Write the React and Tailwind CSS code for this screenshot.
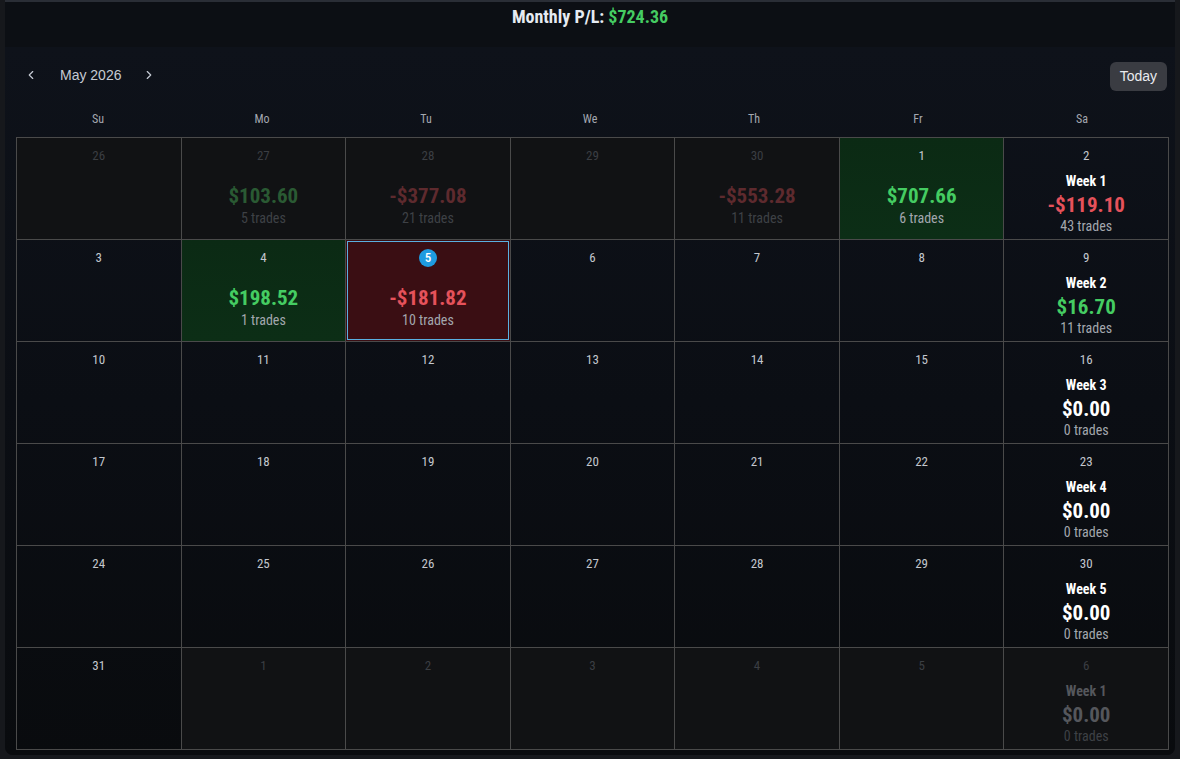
import { ChevronLeft, ChevronRight } from 'lucide-react'

const COND = { fontFamily: "'Roboto Condensed', 'Liberation Sans Narrow', Roboto, sans-serif" }

const days = [
  // week 1
  { d: 26, out: true },
  { d: 27, out: true, pl: 103.6, trades: 5 },
  { d: 28, out: true, pl: -377.08, trades: 21 },
  { d: 29, out: true },
  { d: 30, out: true, pl: -553.28, trades: 11 },
  { d: 1, pl: 707.66, trades: 6 },
  { d: 2, week: 1, pl: -119.1, trades: 43 },
  // week 2
  { d: 3 },
  { d: 4, pl: 198.52, trades: 1 },
  { d: 5, pl: -181.82, trades: 10, today: true },
  { d: 6 },
  { d: 7 },
  { d: 8 },
  { d: 9, week: 2, pl: 16.7, trades: 11 },
  // week 3
  { d: 10 }, { d: 11 }, { d: 12 }, { d: 13 }, { d: 14 }, { d: 15 },
  { d: 16, week: 3, pl: 0, trades: 0 },
  // week 4
  { d: 17 }, { d: 18 }, { d: 19 }, { d: 20 }, { d: 21 }, { d: 22 },
  { d: 23, week: 4, pl: 0, trades: 0 },
  // week 5
  { d: 24 }, { d: 25 }, { d: 26 }, { d: 27 }, { d: 28 }, { d: 29 },
  { d: 30, week: 5, pl: 0, trades: 0 },
  // week 6
  { d: 31 },
  { d: 1, out: true }, { d: 2, out: true }, { d: 3, out: true }, { d: 4, out: true }, { d: 5, out: true },
  { d: 6, out: true, week: 1, pl: 0, trades: 0 },
]

const fmt = (v) => (v < 0 ? '-$' : '$') + Math.abs(v).toFixed(2)

function Amount({ v, out }){
  let color = 'text-white'
  if (v > 0) color = out ? 'text-[#2a5a33]' : 'text-[#45cc62]'
  if (v < 0) color = out ? 'text-[#5e2a2e]' : 'text-[#e5525b]'
  if (v === 0 && out) color = 'text-[#55575c]'
  return <div className={`text-[21px] font-bold leading-[26px] ${color}`} style={COND}>{fmt(v)}</div>
}

function Cell({ c }){
  let bg = c.out ? 'bg-[#111214]' : ''
  if (!c.out && !c.week && c.pl > 0) bg = 'bg-gradient-to-b from-[#0b2a14] to-[#0c2e16]'
  if (!c.out && !c.week && c.pl < 0) bg = 'bg-[#3a0e13]'
  const dateColor = c.out ? 'text-[#3b3e43]' : 'text-[#c3c7ce]'
  const tradeColor = c.out ? 'text-[#3e4146]' : 'text-[#a3a7ae]'
  return (
    <div className={`h-[102px] border-r border-b border-[#4a4a4a] ${bg} ${c.today ? 'p-px' : ''}`}>
      <div className={`h-full flex flex-col items-center ${c.today ? 'border border-[#5ab0e0]' : ''}`}>
        {c.today ? (
          <div className="mt-[7px] w-[18px] h-[18px] rounded-full bg-[#1e9be0] text-white text-[13px] font-medium flex items-center justify-center" style={COND}>{c.d}</div>
        ) : (
          <div className={`mt-[9px] text-[13px] leading-[18px] ${dateColor}`} style={COND}>{c.d}</div>
        )}
        {c.week ? (
          <>
            <div className={`mt-[7px] text-[14px] font-bold leading-[18px] ${c.out ? 'text-[#55575c]' : 'text-white'}`} style={COND}>Week {c.week}</div>
            <div className="mt-[2px]"><Amount v={c.pl} out={c.out} /></div>
            <div className={`-mt-px text-[14px] leading-[18px] ${tradeColor}`} style={COND}>{c.trades} trades</div>
          </>
        ) : c.trades != null ? (
          <>
            <div className={c.today ? 'mt-[18px]' : 'mt-[18px]'}><Amount v={c.pl} out={c.out} /></div>
            <div className={`text-[14px] leading-[18px] ${tradeColor}`} style={COND}>{c.trades} trades</div>
          </>
        ) : null}
      </div>
    </div>
  )
}

export default function App(){
  return (
    <div className="w-[1180px] h-[759px] bg-[#16181c] pl-[5px] pr-[5px]" style={{ fontFamily: "'Liberation Sans', Arial, sans-serif" }}>
      <div className="h-[755px] bg-[#0b0d12] rounded-b-lg overflow-hidden border-t-2 border-[#2a2e36]">
        <div className="h-[45px] flex justify-center pt-[3px] bg-[#0c0f14]">
          <div className="text-[18px] font-bold text-[#e6ebf2] leading-6" style={COND}>
            Monthly P/L: <span className="text-[#45cc62]">$724.36</span>
          </div>
        </div>
        <div className="bg-gradient-to-b from-[#0e121a] via-[#0b0e14] to-[#090b0e] h-[708px] px-[11px]">
          <div className="flex items-center justify-between h-[56px]">
            <div className="flex items-center text-[#c5cad3]">
              <button className="w-[30px] flex justify-center"><ChevronLeft size={14} strokeWidth={2} /></button>
              <span className="ml-[14px] text-[14px]">May 2026</span>
              <button className="w-[30px] flex justify-center ml-[13px]"><ChevronRight size={14} strokeWidth={2} /></button>
            </div>
            <button className="bg-[#3a3c42] text-[#e8eaee] text-[14px] rounded-md px-[10px] h-[29px] mt-[2px] -mr-[3px]">Today</button>
          </div>
          <div className="grid grid-cols-7 h-[34px] items-center">
            {['Su','Mo','Tu','We','Th','Fr','Sa'].map(w => (
              <div key={w} className="text-center text-[12px] text-[#a4a8b0] -mt-[2px]" style={COND}>{w}</div>
            ))}
          </div>
          <div className="grid grid-cols-7 border-l border-t border-[#4a4a4a] w-[1153px]">
            {days.map((c, i) => <Cell key={i} c={c} />)}
          </div>
        </div>
      </div>
    </div>
  )
}
